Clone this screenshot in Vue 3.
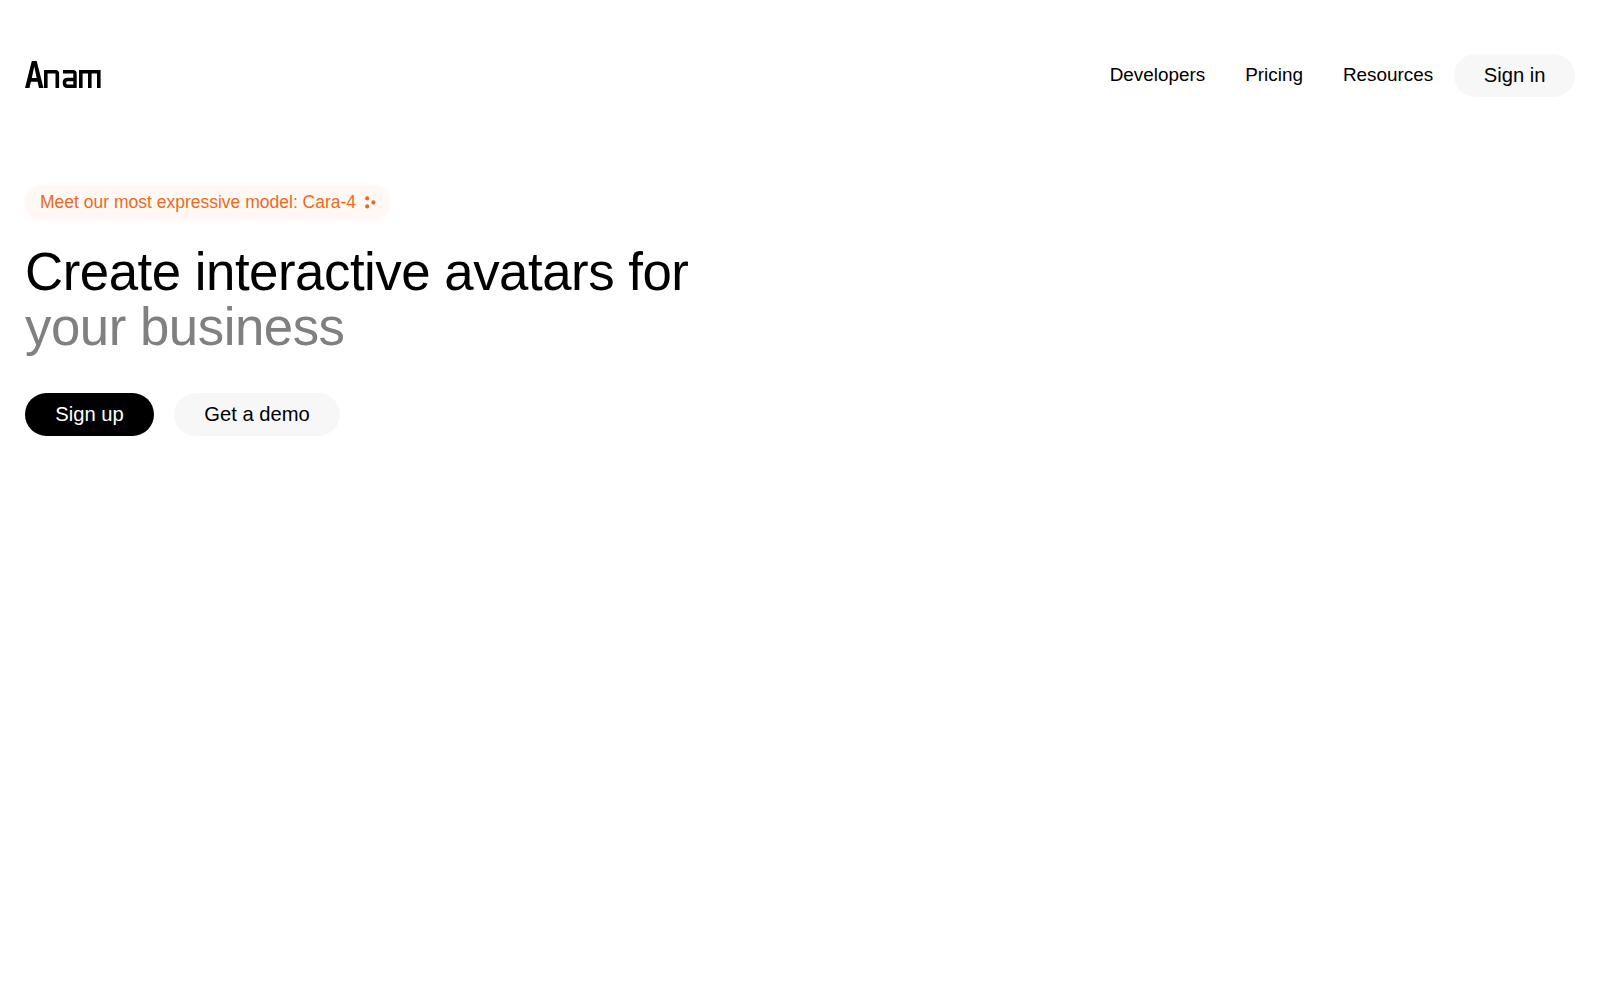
<script setup>
const links = ['Developers', 'Pricing', 'Resources']
</script>

<template>
  <div class="page">
    <header class="nav">
      <svg class="logo" width="76" height="27" viewBox="0 0 76 27" fill="none" aria-label="Anam">
        <path d="M0 27 L6.800 0 H11.700 L18.500 27 H14 L12.600 20.800 H5.900 L4.500 27 Z M6.800 17 H11.700 L9.250 5.500 Z" fill="#000" fill-rule="evenodd" />
        <path d="M20.800 27 V10.800 H30.500 Q32.300 10.800 32.300 12.600 V27" stroke="#000" stroke-width="3.600" />
        <path d="M38 10.800 H48 Q50 10.800 50 12.800 V27 M50 18.500 H42.500 Q39.400 18.500 39.400 21.800 Q39.400 25.300 42.500 25.300 H50" stroke="#000" stroke-width="3.400" />
        <path d="M55.800 27 V10.800 H73.800 V27 M64.800 10.800 V27" stroke="#000" stroke-width="3.600" />
      </svg>
      <nav class="links">
        <a v-for="l in links" :key="l" class="link">{{ l }}</a>
        <a class="pill grey signin">Sign in</a>
      </nav>
    </header>
    <main class="hero">
      <div class="badge">
        <span>Meet our most expressive model: Cara-4</span>
        <svg width="11" height="13" viewBox="0 0 11 13" class="dots">
          <circle cx="2.200" cy="2.400" r="2.100" fill="#ec6a1f" />
          <circle cx="2.200" cy="10.400" r="2.100" fill="#ec6a1f" />
          <circle cx="8.400" cy="6.400" r="2.100" fill="#ec6a1f" />
        </svg>
      </div>
      <h1 class="title">Create interactive avatars for<br /><span class="muted">your business</span></h1>
      <div class="actions">
        <a class="pill dark">Sign up</a>
        <a class="pill grey">Get a demo</a>
      </div>
    </main>
  </div>
</template>

<style scoped>
.page { font-family: "Liberation Sans", Arial, sans-serif; color: #000; background: #fff; min-height: 1000px; }
.nav { display: flex; justify-content: space-between; align-items: center; padding: 53px 25px 0; }
.logo { display: block; margin-bottom: 2px; }
.links { display: flex; align-items: center; }
.link { font-size: 18.900px; margin-right: 40px; line-height: 44px; }
.link:nth-child(3) { margin-right: 21px; }
.pill { display: flex; align-items: center; justify-content: center; height: 43px; border-radius: 22px; padding: 0 30.300px; font-size: 20.200px; }
.signin { padding: 0 29.500px; }
.grey { background: #f7f7f7; color: #000; }
.dark { background: #000; color: #fff; }
.hero { padding: 0 25px; }
.badge { display: inline-flex; align-items: center; gap: 9px; margin-top: 88px; height: 35px; padding: 0 14px 1px 15px; box-sizing: border-box; border-radius: 18px; background: #fff8f4; box-shadow: 0 0 4px #fff8f4; color: #ec6a1f; font-size: 17.500px; }
.title { margin: 24px 0 0; font-size: 52.800px; line-height: 55px; font-weight: 400; letter-spacing: -0.480px; }
.muted { color: #808080; }
.actions { display: flex; gap: 20px; margin-top: 39px; }
</style>
